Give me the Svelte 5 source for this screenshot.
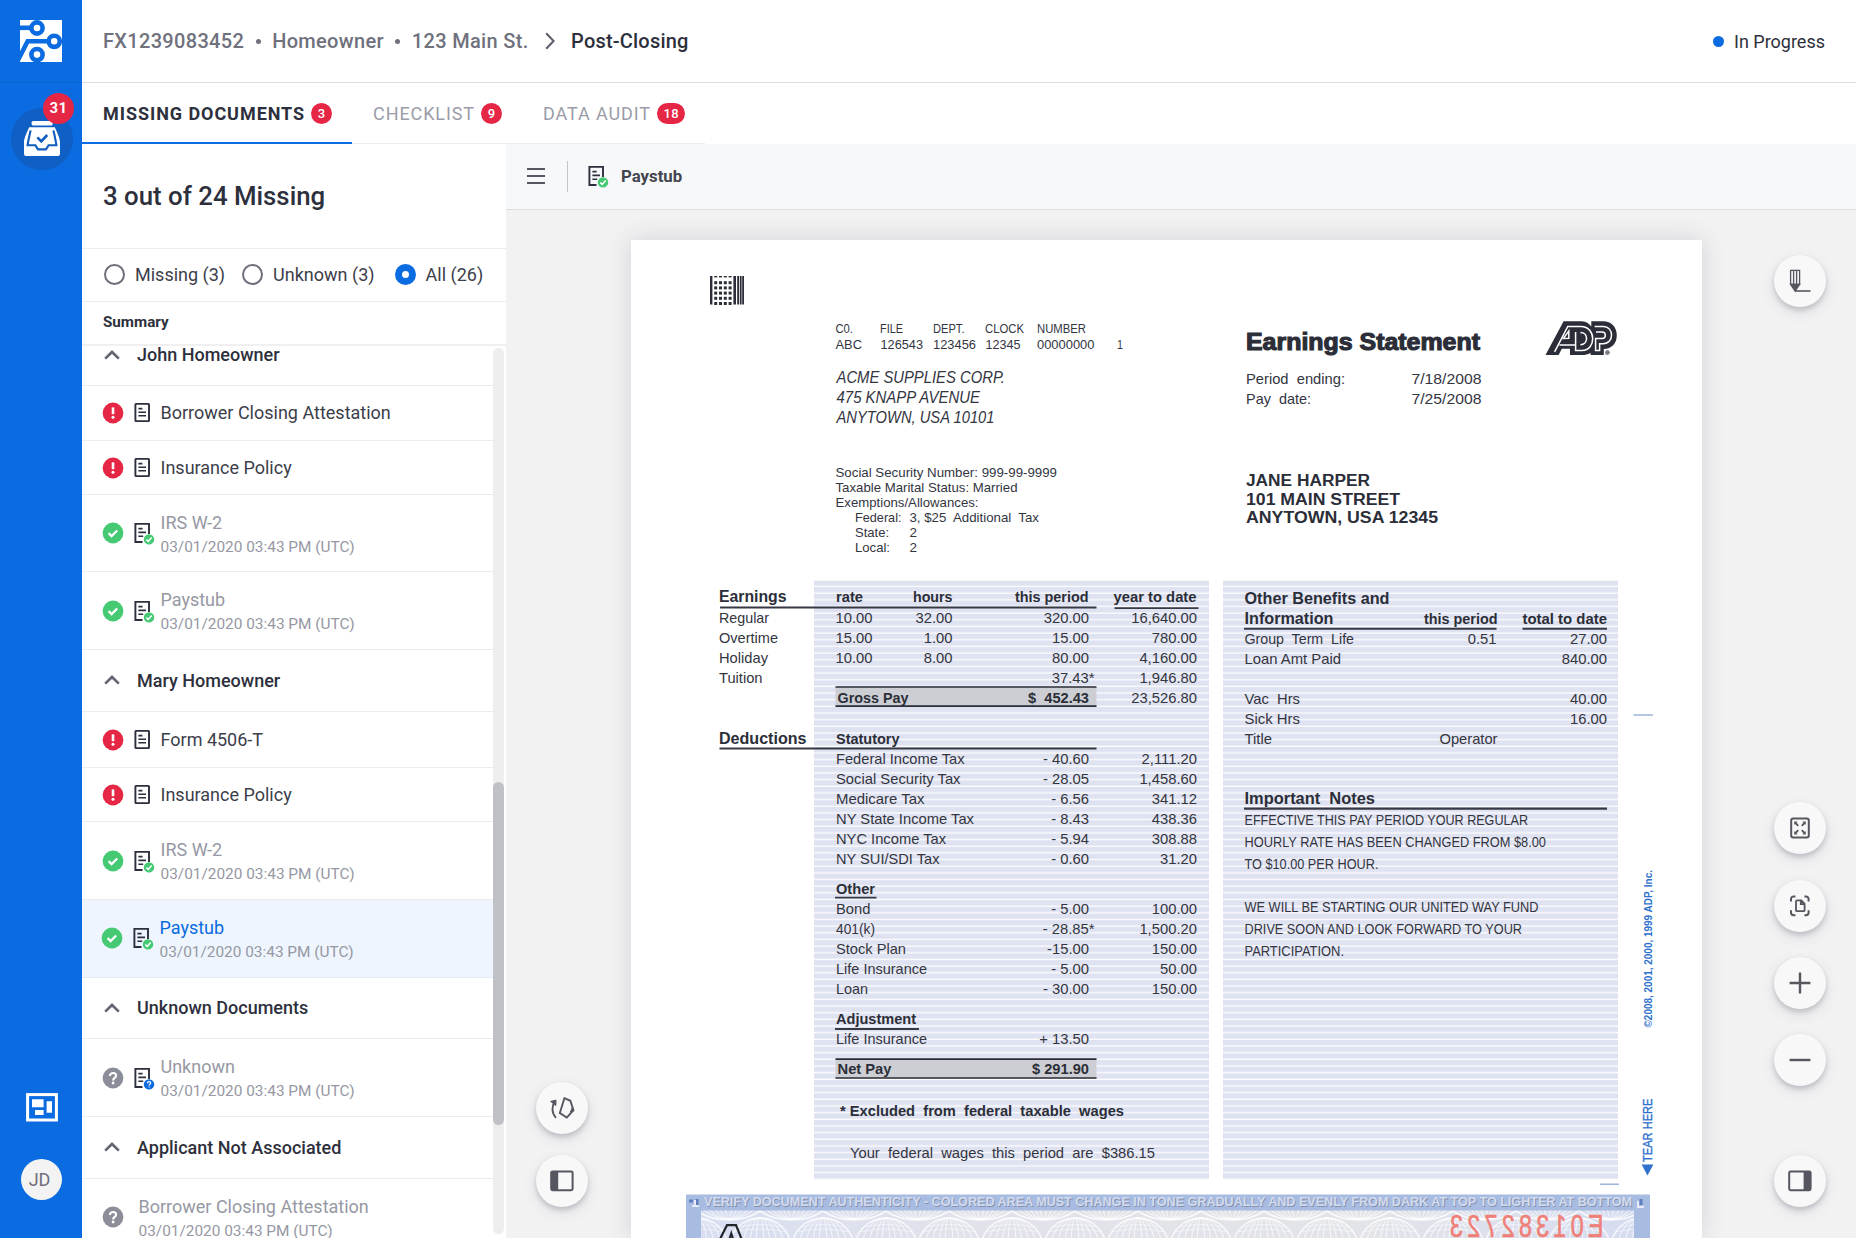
<script>
  const stamp = '03/01/2020 03:43 PM (UTC)';

  const tabs = [
    { label: 'MISSING DOCUMENTS', count: 3, active: true },
    { label: 'CHECKLIST', count: 9 },
    { label: 'DATA AUDIT', count: 18 }
  ];

  const filters = [
    { label: 'Missing (3)' },
    { label: 'Unknown (3)' },
    { label: 'All (26)', checked: true }
  ];

  const groups = [
    {
      title: 'John Homeowner',
      scrolled: true,
      rows: [
        { name: 'Borrower Closing Attestation', status: 'missing', doc: 'plain' },
        { name: 'Insurance Policy', status: 'missing', doc: 'plain' },
        { name: 'IRS W-2', status: 'done', doc: 'check', date: stamp },
        { name: 'Paystub', status: 'done', doc: 'check', date: stamp }
      ]
    },
    {
      title: 'Mary Homeowner',
      rows: [
        { name: 'Form 4506-T', status: 'missing', doc: 'plain', tall: true },
        { name: 'Insurance Policy', status: 'missing', doc: 'plain' },
        { name: 'IRS W-2', status: 'done', doc: 'check', date: stamp },
        { name: 'Paystub', status: 'done', doc: 'check', date: stamp, selected: true }
      ]
    },
    {
      title: 'Unknown Documents',
      rows: [{ name: 'Unknown', status: 'unknown', doc: 'question', date: stamp }]
    },
    {
      title: 'Applicant Not Associated',
      rows: [{ name: 'Borrower Closing Attestation', status: 'unknown', date: stamp }]
    }
  ];

  // Paystub lettering: [x start, x end, baseline, font size, text, class]
  const lettering = [
    [835.5, 853, 332.7, 12, 'C0.'], [880, 903, 332.7, 12, 'FILE'], [933, 964.5, 332.7, 12, 'DEPT.'],
    [985, 1024, 332.7, 12, 'CLOCK'], [1037, 1086, 332.7, 12, 'NUMBER'],
    [835.5, 862, 349.3, 12.8, 'ABC'], [880.5, 923, 349.3, 12.8, '126543'], [933, 976, 349.3, 12.8, '123456'],
    [985.5, 1020.5, 349.3, 12.8, '12345'], [1037, 1094.5, 349.3, 12.8, '00000000'], [1117, 1123, 349.3, 12.8, '1'],
    [836.5, 1005, 383, 15.8, 'ACME SUPPLIES CORP.', 'i'],
    [836.5, 980, 403, 15.8, '475 KNAPP AVENUE', 'i'],
    [836.5, 994.5, 423, 15.8, 'ANYTOWN, USA 10101', 'i'],
    [835.5, 1057, 477.4, 13, 'Social Security Number: 999-99-9999'],
    [835.5, 1017.5, 492.4, 13, 'Taxable Marital Status: Married'],
    [835.5, 978.5, 507.4, 13, 'Exemptions/Allowances:'],
    [855, 901.5, 522.4, 13, 'Federal:'], [909.5, 1039, 522.4, 13, '3, $25  Additional  Tax'],
    [855, 889, 537.4, 13, 'State:'], [909.5, 917, 537.4, 13, '2'],
    [855, 890, 552.4, 13, 'Local:'], [909.5, 917, 552.4, 13, '2'],
    [1246, 1480, 349.6, 23, 'Earnings Statement', 'h'],
    [1246, 1345, 384.3, 15, 'Period  ending:'], [1411.5, 1481.5, 384.3, 15, '7/18/2008'],
    [1246, 1311, 404.3, 15, 'Pay  date:'], [1411.5, 1481.5, 404.3, 15, '7/25/2008'],
    [1246, 1370, 486, 16, 'JANE HARPER', 'b'],
    [1246, 1400, 504.5, 16, '101 MAIN STREET', 'b'],
    [1246, 1438, 523, 16, 'ANYTOWN, USA 12345', 'b'],
    [719, 786.5, 602.4, 16, 'Earnings', 'b'], [836, 863, 602.4, 15, 'rate', 'b'], [913, 952.5, 602.4, 15, 'hours', 'b'],
    [1015, 1088.5, 602.4, 15, 'this period', 'b'], [1113.5, 1196.5, 602.4, 15, 'year to date', 'b'],
    [719, 769, 622.9, 15, 'Regular'], [719, 778, 642.9, 15, 'Overtime'],
    [719, 768, 662.9, 15, 'Holiday'], [719, 762.5, 682.9, 15, 'Tuition'],
    [837.5, 908.5, 702.7, 15, 'Gross Pay', 'b'], [1028, 1089, 702.7, 15, '$  452.43', 'b'],
    [719, 806.5, 744.2, 16, 'Deductions', 'b'], [836, 899.5, 744.2, 15, 'Statutory', 'b'],
    [836, 964.5, 764.3, 15, 'Federal Income Tax'], [836, 960.5, 784.3, 15, 'Social Security Tax'],
    [836, 924.5, 804.3, 15, 'Medicare Tax'], [836, 974, 824.3, 15, 'NY State Income Tax'],
    [836, 946, 844.3, 15, 'NYC Income Tax'], [836, 939.5, 864.3, 15, 'NY SUI/SDI Tax'],
    [836, 875, 894.3, 15, 'Other', 'b'],
    [836, 870.5, 914.2, 15, 'Bond'], [836, 875, 934.2, 15, '401(k)'], [836, 906, 954.2, 15, 'Stock Plan'],
    [836, 927, 974.2, 15, 'Life Insurance'], [836, 868, 994.2, 15, 'Loan'],
    [836, 916, 1024.3, 15, 'Adjustment', 'b'], [836, 927, 1044.3, 15, 'Life Insurance'],
    [837.5, 891.5, 1074.4, 15, 'Net Pay', 'b'], [1032, 1089, 1074.4, 15, '$ 291.90', 'b'],
    [840, 1124, 1116.3, 15, '* Excluded  from  federal  taxable  wages', 'b'],
    [850, 1155, 1158, 15, 'Your  federal  wages  this  period  are  $386.15'],
    [1244.5, 1389.5, 603.7, 16, 'Other Benefits and', 'b'], [1244.5, 1333.5, 624, 16, 'Information', 'b'],
    [1424, 1497.5, 624, 15, 'this period', 'b'], [1522.5, 1607, 624, 15, 'total to date', 'b'],
    [1244.5, 1354, 643.8, 15, 'Group  Term  Life'], [1244.5, 1341, 663.8, 15, 'Loan Amt Paid'],
    [1244.5, 1300, 703.8, 15, 'Vac  Hrs'], [1244.5, 1300, 723.8, 15, 'Sick Hrs'],
    [1244.5, 1272, 743.8, 15, 'Title'], [1439.5, 1497.5, 743.8, 15, 'Operator'],
    [1244.5, 1375, 803.7, 16, 'Important  Notes', 'b'],
    [1244.5, 1528, 825.3, 13.8, 'EFFECTIVE THIS PAY PERIOD YOUR REGULAR'],
    [1244.5, 1546, 847.1, 13.8, 'HOURLY RATE HAS BEEN CHANGED FROM $8.00'],
    [1244.5, 1378.5, 868.9, 13.8, 'TO $10.00 PER HOUR.'],
    [1244.5, 1538.5, 912.2, 13.8, 'WE WILL BE STARTING OUR UNITED WAY FUND'],
    [1244.5, 1522, 933.9, 13.8, 'DRIVE SOON AND LOOK FORWARD TO YOUR'],
    [1244.5, 1344, 955.6, 13.8, 'PARTICIPATION.']
  ];

  // Right-aligned amounts: [right edge, baseline, value]
  const amounts = [
    [872.5, 622.9, '10.00'], [872.5, 642.9, '15.00'], [872.5, 662.9, '10.00'],
    [952.5, 622.9, '32.00'], [952.5, 642.9, '1.00'], [952.5, 662.9, '8.00'],
    [1089, 622.9, '320.00'], [1089, 642.9, '15.00'], [1089, 662.9, '80.00'], [1094.5, 682.9, '37.43*'],
    [1197, 622.9, '16,640.00'], [1197, 642.9, '780.00'], [1197, 662.9, '4,160.00'], [1197, 682.9, '1,946.80'],
    [1197, 702.7, '23,526.80'],
    [1089, 764.3, '- 40.60'], [1089, 784.3, '- 28.05'], [1089, 804.3, '- 6.56'],
    [1089, 824.3, '- 8.43'], [1089, 844.3, '- 5.94'], [1089, 864.3, '- 0.60'],
    [1197, 764.3, '2,111.20'], [1197, 784.3, '1,458.60'], [1197, 804.3, '341.12'],
    [1197, 824.3, '438.36'], [1197, 844.3, '308.88'], [1197, 864.3, '31.20'],
    [1089, 914.2, '- 5.00'], [1094.5, 934.2, '- 28.85*'], [1089, 954.2, '-15.00'],
    [1089, 974.2, '- 5.00'], [1089, 994.2, '- 30.00'], [1089, 1044.3, '+ 13.50'],
    [1197, 914.2, '100.00'], [1197, 934.2, '1,500.20'], [1197, 954.2, '150.00'],
    [1197, 974.2, '50.00'], [1197, 994.2, '150.00'],
    [1496.5, 643.8, '0.51'], [1607, 643.8, '27.00'], [1607, 663.8, '840.00'],
    [1607, 703.8, '40.00'], [1607, 723.8, '16.00']
  ];

  // Rules: [x1, x2, y, thickness]
  const rules = [
    [720, 1096.5, 607.5, 2], [1114.5, 1198.5, 608.2, 1.8], [719.5, 1096.5, 748.5, 1.8],
    [835, 876.5, 897.6, 1.8], [835, 919, 1029, 1.8],
    [1244, 1496.5, 628.7, 2], [1522.5, 1607, 628.7, 2], [1244, 1607, 808.6, 2.2]
  ];
</script>

{#snippet docIcon(kind)}
  <svg class="doc" width="24" height="24" viewBox="0 0 24 24" fill="none">
    {#if kind === 'plain'}
      <rect x="2.4" y="2.9" width="13.6" height="17.2" rx=".6" stroke="#2c2f3c" stroke-width="1.9" />
      <path d="M5.4 7.6h4M5.4 11.2h7.6M5.4 14.8h7.6" stroke="#2c2f3c" stroke-width="1.6" />
    {:else}
      <path d="M9.5 21H2.4V2.9H16V13" stroke="#2c2f3c" stroke-width="1.9" />
      <path d="M5.4 7.6h4.2M5.4 11.4h7.6M5.4 15.2h4.8" stroke="#2c2f3c" stroke-width="1.6" />
      <circle cx="16" cy="18.4" r="5.2" fill={kind === 'check' ? '#45c973' : '#0b6be0'} />
      {#if kind === 'check'}
        <path d="M13.3 18.6l1.9 1.8 3.5-3.9" stroke="#fff" stroke-width="1.5" />
      {:else}
        <path d="M14.4 17.2c0-2.2 3.3-2 3.3-.2 0 1.1-1.6 1.2-1.6 2.4M16.1 20.4v1.1" stroke="#fff" stroke-width="1.2" />
      {/if}
    {/if}
  </svg>
{/snippet}

{#snippet statusIcon(kind)}
  <svg class="status" width="22" height="22" viewBox="0 0 22 22" fill="none">
    {#if kind === 'missing'}
      <circle cx="11" cy="11" r="10.4" fill="#e62645" />
      <path d="M11 5.4v6.8" stroke="#fff" stroke-width="2.6" />
      <circle cx="11" cy="15.3" r="1.5" fill="#fff" />
    {:else if kind === 'done'}
      <circle cx="11" cy="11" r="10.4" fill="#45c973" />
      <path d="M6.6 11.2l3 2.9 5.6-5.6" stroke="#fff" stroke-width="2.3" />
    {:else}
      <circle cx="11" cy="11" r="10.4" fill="#8b8d98" />
      <path d="M7.9 8.9c0-3.9 6.2-3.7 6.2-.2 0 2.2-3 2.2-3 4.7" stroke="#fff" stroke-width="2.1" />
      <circle cx="11.1" cy="16" r="1.4" fill="#fff" />
    {/if}
  </svg>
{/snippet}

<div class="app">
  <nav class="rail">
    <div class="brand">
      <svg width="42" height="42" viewBox="0 0 42 42">
        <rect width="42" height="42" fill="#fff" />
        <g stroke="#0b6be0" stroke-width="4.6" fill="none">
          <path d="M0 7.8h11" />
          <path d="M28 21.3H7.6L-2.4 41" />
          <circle cx="17" cy="8" r="5.6" fill="#fff" />
          <circle cx="34.2" cy="21.3" r="5.6" fill="#fff" />
          <circle cx="17" cy="34.6" r="5.6" fill="#fff" />
        </g>
      </svg>
    </div>
    <div class="inbox">
      <svg width="36" height="36" viewBox="0 0 36 36" fill="none">
        <rect x="7.6" y="0" width="21" height="4.6" rx="1.6" fill="#fff" />
        <path d="M5.2 6.2H30.8C32 9 36 17 36 21V33a2 2 0 0 1-2 2H2a2 2 0 0 1-2-2V21C0 17 4 9 5.2 6.2z" fill="#fff" />
        <path d="M6.6 9.4C5.6 14 4.4 18.5 3.6 24.2H11.4L14 28.4H22L24.6 24.2H32.4C31.6 18.5 30.4 14 29.4 9.4" stroke="#0f5cc0" stroke-width="2.1" />
        <path d="M13.4 16.4l3.9 3.9 5.9-6.3" stroke="#0f5cc0" stroke-width="2.6" />
      </svg>
      <span class="alert">31</span>
    </div>
    <div class="rail-foot">
      <svg width="32" height="29" viewBox="0 0 32 29" fill="none">
        <rect x="1.6" y="1.6" width="28.8" height="25.4" stroke="#fff" stroke-width="3" />
        <path d="M6 6.2h11.6v8H6zM9 17h8.6v5H9zM20.6 8.2H26v11.6h-5.4z" fill="#fff" />
      </svg>
      <span class="avatar">JD</span>
    </div>
  </nav>

  <div class="main">
    <header class="top">
      <div class="crumbs">
        <span>FX1239083452</span><i></i><span>Homeowner</span><i></i><span>123 Main St.</span>
        <svg width="10" height="18" viewBox="0 0 10 18" fill="none"><path d="M1.2 1.2L8.6 9l-7.4 7.8" stroke="#5f616d" stroke-width="2.2" /></svg>
        <b>Post-Closing</b>
      </div>
      <div class="progress"><i></i>In Progress</div>
    </header>

    <div class="tabs">
      {#each tabs as tab}
        <div class="tab" class:active={tab.active}>{tab.label}<span>{tab.count}</span></div>
      {/each}
    </div>

    <div class="body">
      <section class="panel">
        <h1>3 out of 24 Missing</h1>
        <div class="filters">
          {#each filters as f}
            <span class="radio" class:checked={f.checked}><i></i>{f.label}</span>
          {/each}
        </div>
        <h2>Summary</h2>
        <div class="scroller">
          <div class="list">
            {#each groups as group}
              <div class="group" class:scrolled={group.scrolled}>
                <svg width="16" height="10" viewBox="0 0 16 10" fill="none"><path d="M1.2 8.6L8 2l6.8 6.6" stroke="#62646f" stroke-width="2.7" /></svg>
                {group.title}
              </div>
              {#each group.rows as row}
                <div class="row" class:double={row.date} class:tall={row.tall} class:selected={row.selected} class:nodoc={!row.doc}>
                  {@render statusIcon(row.status)}
                  {#if row.doc}{@render docIcon(row.doc)}{/if}
                  <div class="words">
                    <div class="name">{row.name}</div>
                    {#if row.date}<div class="date">{row.date}</div>{/if}
                  </div>
                </div>
              {/each}
            {/each}
          </div>
          <div class="track"><div class="thumb"></div></div>
        </div>
      </section>

      <section class="viewer">
        <div class="toolbar">
          <svg width="18" height="18" viewBox="0 0 18 18"><path d="M0 2h18M0 9h18M0 16h18" stroke="#55565f" stroke-width="2.1" /></svg>
          <span class="bar"></span>
          {@render docIcon('check')}
          <span class="doc-title">Paystub</span>
        </div>
        <div class="canvas">
          <div class="tools left">
            <button aria-label="Rotate">
              <svg width="26" height="26" viewBox="0 0 26 26" fill="none" stroke="#55565f" stroke-width="1.9">
                <path d="M15.4 3.2l6 2.6 3 9.4-6.6 7.4-7-4.6z" />
                <path d="M7 22.8C2.6 18.4 2.4 11.4 6 6.4" />
                <path d="M1.6 6.4l5.4-1.3-.2 5.4z" fill="#55565f" stroke-width="1" />
                <path d="M23.4 12.4l1.4 3.4-3.4 1.2z" fill="#55565f" stroke-width="1" />
              </svg>
            </button>
            <button aria-label="Left panel">
              <svg width="24" height="22" viewBox="0 0 24 22"><rect x="1.2" y="1.4" width="21.4" height="18.8" rx="1.4" fill="none" stroke="#55565f" stroke-width="2" /><path d="M1.2 1.4h7v18.8h-7z" fill="#55565f" /></svg>
            </button>
          </div>

          <div class="paper">
            <svg viewBox="631 240 1071 998" width="1071" height="998">
              <defs>
                <pattern id="ruled" x="0" y="580.5" width="20" height="6.66" patternUnits="userSpaceOnUse">
                  <rect width="20" height="6.66" fill="#dfe2f1" />
                  <rect y="5.3" width="20" height="1.36" fill="#fcfcfe" />
                </pattern>
                <pattern id="globes" x="760" y="1210" width="63" height="66" patternUnits="userSpaceOnUse">
                  <g fill="none" stroke="#fff" stroke-width=".9" stroke-opacity=".8">
                    <ellipse cx="0" cy="38" rx="31" ry="30" stroke-width="1.6" />
                    <ellipse cx="63" cy="38" rx="31" ry="30" stroke-width="1.6" />
                    <ellipse cx="0" cy="38" rx="24" ry="30" /><ellipse cx="63" cy="38" rx="24" ry="30" />
                    <ellipse cx="0" cy="38" rx="17" ry="30" /><ellipse cx="63" cy="38" rx="17" ry="30" />
                    <ellipse cx="0" cy="38" rx="10" ry="30" /><ellipse cx="63" cy="38" rx="10" ry="30" />
                    <ellipse cx="0" cy="38" rx="4" ry="30" /><ellipse cx="63" cy="38" rx="4" ry="30" />
                    <ellipse cx="31.5" cy="-20" rx="44" ry="30" stroke-width="1.6" />
                    <ellipse cx="31.5" cy="-20" rx="34" ry="29" /><ellipse cx="31.5" cy="-20" rx="26" ry="29" />
                    <ellipse cx="31.5" cy="-20" rx="18" ry="29" /><ellipse cx="31.5" cy="-20" rx="11" ry="29" />
                    <ellipse cx="31.5" cy="-20" rx="4" ry="29" />
                    <path d="M-26 22q26-6 52 0M37 22q26-6 52 0M-22 17q22-5 44 0M41 17q22-5 44 0" stroke-width=".6" />
                  </g>
                </pattern>
                <linearGradient id="wash">
                  <stop offset="0" stop-color="#d8def1" />
                  <stop offset=".3" stop-color="#e2e3ea" />
                  <stop offset=".72" stop-color="#e3e4e9" />
                  <stop offset="1" stop-color="#d6dcf0" />
                </linearGradient>
              </defs>

              <rect x="814" y="580.5" width="395" height="599.2" fill="url(#ruled)" />
              <rect x="1223" y="580.5" width="395" height="599.2" fill="url(#ruled)" />

              <g fill="#cdced3">
                <rect x="835.5" y="686.5" width="261" height="20" />
                <rect x="835.5" y="1058.5" width="261" height="20" />
              </g>
              <path d="M835.5 687h261M835.5 706.2h261M835.5 1059.2h261M835.5 1078h261" stroke="#2b2e38" stroke-width="1.7" />

              {#each rules as [x1, x2, y, w]}
                <path d="M{x1} {y}H{x2}" stroke="#363843" stroke-width={w} />
              {/each}

              {#each lettering as [x1, x2, y, size, text, look]}
                <text class="ink {look ?? ''}" x={x1} {y} font-size={size} textLength={x2 - x1} lengthAdjust="spacingAndGlyphs">{text}</text>
              {/each}
              {#each amounts as [x, y, text]}
                <text class="ink" {x} {y} font-size="14.8" text-anchor="end">{text}</text>
              {/each}

              <g fill="#2b2e38">
                <path d="M710 276h2.4v28.5H710zM733.4 276h2.6v28.5h-2.6zM737.2 276h2v28.5h-2zM740 276h1.6v28.5H740zM742.2 276h1.8v28.5h-1.8z" />
                {#each [0, 1, 2, 3, 4, 5] as r}
                  {#each [0, 1, 2, 3] as c}
                    <rect x={714.2 + c * 4.8} y={276 + r * 5.2} width="3" height={r ? 3 : 1.4} />
                  {/each}
                {/each}
              </g>

              <path fill="#2b2e38" d="M1545.5 355L1563.6 321.3H1582C1586 321.3 1589 323.5 1591.3 326.6V321.3H1603C1611.5 321.3 1616.8 327.5 1616.8 335.2C1616.8 343.5 1611.5 348.8 1603.8 349V355H1590.6V353C1587.6 354.4 1585 355 1582 355H1570V348.8H1561.8L1558.6 355Z" />
              <g fill="none" stroke="#fff" stroke-width="1.5">
                <path d="M1554.6 351.8L1567.8 326.4H1581C1596.4 326.4 1596.4 350.6 1582 350.6H1575.6V332" />
                <path d="M1559.4 345H1575.6M1563.4 338.4L1568.8 331V338.2Z" />
                <path d="M1580.4 332.4C1588.6 332.4 1588.6 344.8 1580.4 344.8" />
                <path d="M1594.6 326.4H1603C1614.4 326.4 1614.4 343.8 1603 343.8H1599.6V350.6H1595.6V338.4H1602C1606.4 338.4 1606.4 332 1602 332H1596" />
              </g>
              <circle cx="1607.4" cy="352.6" r="2.4" fill="#777984" />

              <path d="M1633.5 715h19.5M1600 1184.3h19" stroke="#9db4de" stroke-width="1.5" />
              <g class="edge">
                <text transform="translate(1651.8 1027.5) rotate(-90)" font-size="10.8" textLength="157.5" lengthAdjust="spacingAndGlyphs">©2008, 2001, 2000, 1999 ADP, Inc.</text>
                <text class="tear" transform="translate(1652.3 1162) rotate(-90)" font-size="13.6" textLength="63.5" lengthAdjust="spacingAndGlyphs">TEAR HERE</text>
                <path d="M1641.6 1164.4h11.8l-5.9 11z" />
              </g>

              <rect x="686" y="1194.5" width="964" height="50" fill="#a8bbe0" />
              <rect x="701" y="1210.5" width="933" height="30" fill="url(#wash)" />
              <rect x="701" y="1210.5" width="933" height="30" fill="url(#globes)" />
              <g class="micro">
                <text x="704.8" y="1207" font-size="12.6" textLength="928" lengthAdjust="spacingAndGlyphs" fill="#8490ac">VERIFY DOCUMENT AUTHENTICITY - COLORED AREA MUST CHANGE IN TONE GRADUALLY AND EVENLY FROM DARK AT TOP TO LIGHTER AT BOTTOM</text>
                <text x="704" y="1206" font-size="12.6" textLength="928" lengthAdjust="spacingAndGlyphs" fill="#d3dcee" aria-hidden="true">VERIFY DOCUMENT AUTHENTICITY - COLORED AREA MUST CHANGE IN TONE GRADUALLY AND EVENLY FROM DARK AT TOP TO LIGHTER AT BOTTOM</text>
              </g>
              <path d="M689 1201h4M697 1199v6M1641 1199v6" stroke="#5f7fc0" stroke-width="3" fill="none" />
              <path d="M692 1206h7M695 1200v6M1637 1207h7M1638 1201v6" stroke="#e6ebf6" stroke-width="2" />
              <path d="M717 1245L727 1225.2H736L744 1245M727.5 1245L731.3 1233.5L735 1245" fill="none" stroke="#23252d" stroke-width="2.2" />
              <text class="serial" transform="translate(1603.5 1237.4) scale(-.76 1)" font-size="31" textLength="202" lengthAdjust="spacing">E01382723</text>
            </svg>
          </div>

          <div class="tools right">
            <button aria-label="Annotate" class="push">
              <svg width="24" height="26" viewBox="0 0 24 26" fill="none" stroke="#55565f" stroke-width="1.3">
                <path d="M2.6 2.4h9v14h-9zM5.6 2.4v14M8.6 2.4v14" />
                <path d="M2.6 16.4h9L7.1 23z" fill="#55565f" />
                <path d="M7 23h15.5" stroke-width="1.6" />
              </svg>
            </button>
            <button aria-label="Fit to screen">
              <svg width="24" height="26" viewBox="0 0 24 26" fill="none" stroke="#55565f">
                <rect x="3.2" y="3.4" width="17.6" height="19.2" rx="2" stroke-width="2" />
                <path d="M7.4 7.8l2.8 3M16.6 7.8l-2.8 3M7.4 18.2l2.8-3M16.6 18.2l-2.8-3" stroke-width="1.9" />
                <path d="M6.8 9.4V7.2h2.4M14.8 7.2h2.4v2.2M6.8 16.6v2.2h2.4M14.8 18.8h2.4v-2.2" stroke-width="1.2" />
              </svg>
            </button>
            <button aria-label="Fit page">
              <svg width="24" height="26" viewBox="0 0 24 26" fill="none" stroke="#55565f" stroke-width="2">
                <path d="M3 8.4V6a2.6 2.6 0 0 1 2.6-2.6H7.4M16.4 3.4H18A2.6 2.6 0 0 1 20.6 6v2.4M20.6 17.2v2.4a2.6 2.6 0 0 1-2.6 2.6h-1.6M7.4 22.2H5.6A2.6 2.6 0 0 1 3 19.6v-2.4" />
                <path d="M9 7.4h4.4l3.2 3.4v6.4a1 1 0 0 1-1 1H9a1 1 0 0 1-1-1V8.4a1 1 0 0 1 1-1zM12.8 7.6v3.6h3.6" stroke-width="1.8" />
              </svg>
            </button>
            <button aria-label="Zoom in">
              <svg width="22" height="22" viewBox="0 0 22 22"><path d="M.6 11h20.8M11 .6v20.8" stroke="#55565f" stroke-width="2.4" /></svg>
            </button>
            <button aria-label="Zoom out">
              <svg width="22" height="22" viewBox="0 0 22 22"><path d="M.6 11h20.8" stroke="#55565f" stroke-width="2.4" /></svg>
            </button>
            <button aria-label="Right panel" class="last">
              <svg width="24" height="22" viewBox="0 0 24 22"><rect x="1.2" y="1.4" width="21.4" height="18.8" rx="1.4" fill="none" stroke="#55565f" stroke-width="2" /><path d="M15.6 1.4h7v18.8h-7z" fill="#55565f" /></svg>
            </button>
          </div>
        </div>
      </section>
    </div>
  </div>
</div>

<style>
  :global(body) { background: #fff; overflow: hidden; }
  * { box-sizing: border-box; }
  svg { display: block; flex: none; }

  .app {
    display: flex;
    width: 1856px;
    height: 1238px;
    overflow: hidden;
    font-family: Roboto, "Liberation Sans", sans-serif;
    font-size: 18px;
    color: #2d303c;
  }

  .rail { width: 82px; background: #0b6be0; display: flex; flex-direction: column; align-items: center; flex: none; }
  .brand { width: 82px; height: 83px; padding: 20px; border-bottom: 1px solid #0e63cc; }
  .inbox {
    position: relative;
    width: 62px;
    height: 62px;
    margin: 25px 0 0 2px;
    border-radius: 50%;
    background: #0f5fc4;
    display: flex;
    align-items: center;
    justify-content: center;
  }
  .alert {
    position: absolute;
    top: -15px;
    left: 32px;
    width: 31px;
    height: 31px;
    border-radius: 50%;
    background: #e62645;
    color: #fff;
    font-size: 15px;
    font-weight: 700;
    letter-spacing: 0.4px;
    line-height: 31px;
    text-align: center;
  }
  .rail-foot { margin-top: auto; padding: 0 0 38px 1px; display: flex; flex-direction: column; align-items: center; gap: 37px; }
  .avatar {
    width: 41px;
    height: 41px;
    border-radius: 50%;
    background: #f3f3f4;
    color: #6d6f7b;
    font-size: 18px;
    line-height: 41px;
    text-align: center;
    padding-right: 4px;
  }

  .main { flex: 1; min-width: 0; display: flex; flex-direction: column; }
  .top { height: 83px; border-bottom: 1px solid #dfdfe1; display: flex; justify-content: space-between; padding: 0 31px 0 21px; flex: none; }
  .crumbs { display: flex; align-items: center; height: 82px; font-size: 20px; font-weight: 500; color: #6f717d; letter-spacing: 0.32px; }
  .crumbs i { width: 5px; height: 5px; border-radius: 50%; background: #6f717d; margin: 0 11.5px; }
  .crumbs svg { margin: 0 16px 0 16.5px; }
  .crumbs b { font-weight: 500; color: #2d303c; letter-spacing: 0.2px; }
  .progress { display: flex; align-items: center; height: 82px; }
  .progress i { width: 11px; height: 11px; border-radius: 50%; background: #0b6be0; margin-right: 10px; }

  .tabs { height: 61px; display: flex; flex: none; }
  .tab {
    display: flex;
    align-items: center;
    height: 61px;
    padding: 0 20px 0 21px;
    border-bottom: 1px solid #ececee;
    color: #9a9ca7;
    letter-spacing: 0.9px;
  }
  .tab span {
    min-width: 21px;
    height: 21px;
    margin-left: 6px;
    padding: 0 6.5px;
    border-radius: 11px;
    background: #e62645;
    color: #fff;
    font-size: 13px;
    font-weight: 500;
    letter-spacing: 0.3px;
    line-height: 21px;
    text-align: center;
  }
  .tab.active { font-weight: 700; color: #2d303c; border-bottom: 2px solid #0b6be0; letter-spacing: 0.94px; padding-top: 1px; }

  .body { flex: 1; min-height: 0; display: flex; }
  .panel { width: 424px; flex: none; display: flex; flex-direction: column; background: #fff; }
  h1 { margin: 0; height: 105px; padding-left: 21px; border-bottom: 1px solid #ececee; font-size: 25.8px; font-weight: 500; line-height: 105px; flex: none; }
  .filters { height: 53px; padding: 0 0 1px 22px; border-bottom: 1px solid #ececee; display: flex; flex: none; }
  .radio { display: flex; align-items: center; margin-right: 17px; color: #3c3e4a; }
  .radio i { width: 21px; height: 21px; border: 2.5px solid #6d6f7b; border-radius: 50%; margin-right: 10px; }
  .radio.checked { margin-left: 3px; }
  .radio.checked i { border: 7px solid #0b6be0; }
  h2 { margin: 0; height: 44px; padding-left: 21px; border-bottom: 2px solid #f0f0f1; font-size: 15.2px; font-weight: 700; line-height: 41px; flex: none; }

  .scroller { flex: 1; min-height: 0; display: flex; overflow: hidden; }
  .list { width: 411px; flex: none; }
  .group {
    height: 61.8px;
    padding-left: 22px;
    border-bottom: 1px solid #ececee;
    display: flex;
    align-items: center;
    gap: 17px;
    font-weight: 500;
  }
  .group.scrolled { height: 40.4px; padding-bottom: 22px; line-height: 18px; }
  .row { height: 54.2px; padding: 1px 0 0 19.5px; border-bottom: 1px solid #ececee; display: flex; align-items: center; }
  .row.double { height: 77.6px; padding-top: 0; }
  .row.tall { height: 56.4px; }
  .row.selected { padding-left: 18.5px; background: #eef5fe; border-color: #e4ebf5; }
  .doc { margin-left: 9px; }
  .words { padding-left: 4px; line-height: 24px; }
  .double .words { padding-top: 4px; }
  .nodoc .words { padding-left: 15px; }
  .name { color: #3c3e4a; white-space: nowrap; }
  .double .name { color: #9698a3; }
  .double .date { color: #9698a3; font-size: 15.4px; line-height: 25px; white-space: nowrap; }
  .selected .name { color: #0b6be0; }
  .track { width: 11px; height: 886px; margin-top: 2px; border-radius: 6px; background: #eeeeef; padding-top: 434px; }
  .thumb { height: 343px; border-radius: 6px; background: #c0c1c7; }

  .viewer { flex: 1; min-width: 0; display: flex; flex-direction: column; }
  .toolbar { height: 66px; background: #f7f8f9; border-bottom: 1px solid #dcdcde; display: flex; align-items: center; padding: 0 0 1px 21px; flex: none; }
  .bar { width: 1px; height: 31px; background: #c3c4c9; margin: 0 10px 0 22px; }
  .doc-title { margin-left: 10px; font-size: 16.8px; font-weight: 700; color: #43454f; }
  .canvas { flex: 1; min-height: 0; background: #f2f2f3; display: flex; overflow: hidden; }
  .paper { margin-top: 30px; background: #fff; box-shadow: 0 0 22px rgba(60, 62, 80, 0.17); width: 1071px; flex: none; }
  .tools { display: flex; flex-direction: column; }
  .left { width: 125px; padding-left: 30px; justify-content: flex-end; padding-bottom: 31px; gap: 21.5px; }
  .right { padding: 45px 0 31px 71.5px; gap: 25.3px; }
  button {
    width: 52px;
    height: 52px;
    padding: 0;
    border: 0;
    border-radius: 50%;
    background: #f8f8f9;
    box-shadow: 0 3px 5px rgba(60, 62, 80, 0.22), 0 5px 14px rgba(60, 62, 80, 0.12);
    display: flex;
    align-items: center;
    justify-content: center;
    flex: none;
  }
  .push { margin-bottom: auto; }
  .last { margin-top: 43.4px; }

  .ink { font-family: "Liberation Sans", sans-serif; fill: #33353f; white-space: pre; }
  .i { font-style: italic; }
  .b { font-weight: 700; fill: #2b2e38; }
  .h { font-weight: 700; fill: #2b2e38; stroke: #2b2e38; stroke-width: 1.1; }
  .edge { font-family: "Liberation Sans", sans-serif; fill: #2f72cc; font-weight: 700; }
  .tear { font-weight: 400; stroke: #2f72cc; stroke-width: 0.4; }
  .micro { font-family: "Liberation Sans", sans-serif; font-weight: 700; }
  .serial { font-family: "Liberation Sans", sans-serif; fill: #ef8078; stroke: #ef8078; stroke-width: 0.6; }
</style>
